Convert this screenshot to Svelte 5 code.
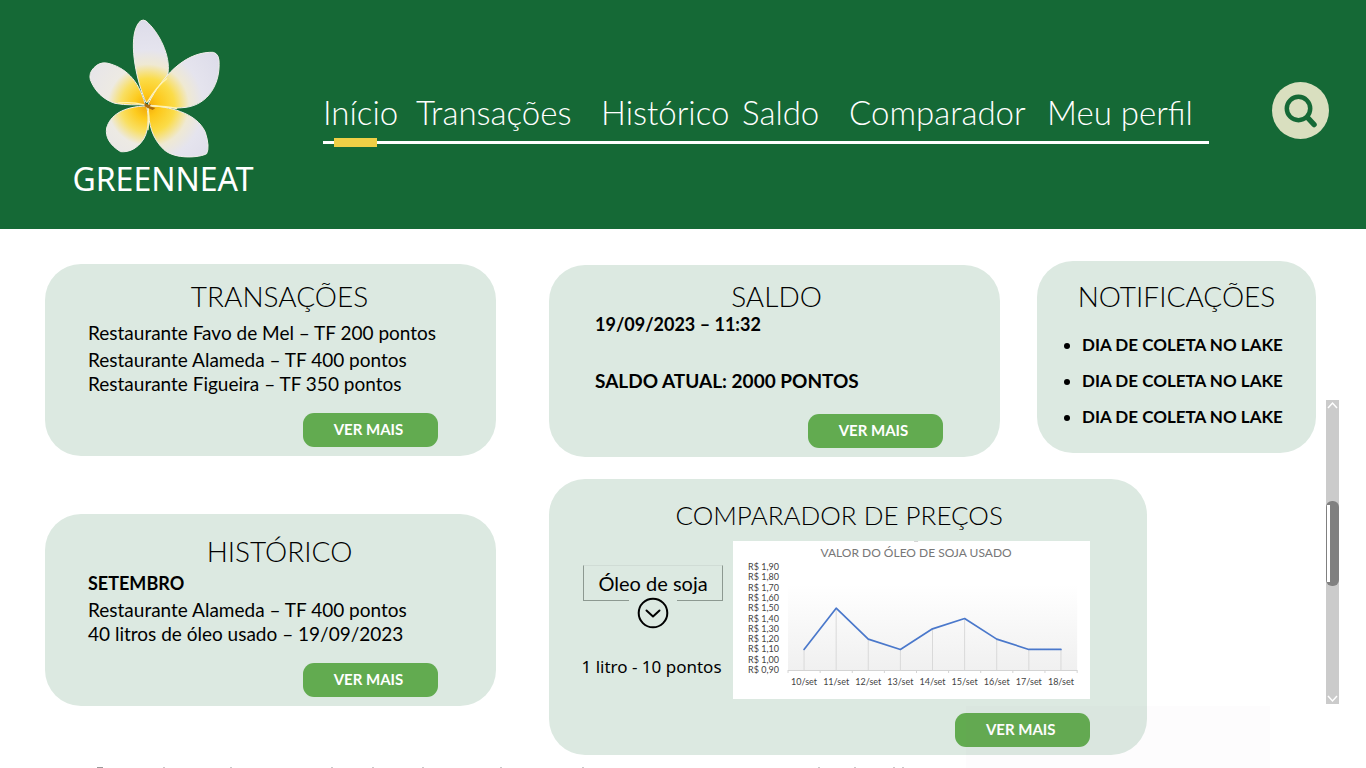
<script>
  const links = ['Início', 'Transações', 'Histórico', 'Saldo', 'Comparador', 'Meu perfil'];
  const notices = ['DIA DE COLETA NO LAKE', 'DIA DE COLETA NO LAKE', 'DIA DE COLETA NO LAKE'];
  const prices = [1.1, 1.5, 1.2, 1.1, 1.3, 1.4, 1.2, 1.1, 1.1];
  const ticks = ['1,90', '1,80', '1,70', '1,60', '1,50', '1,40', '1,30', '1,20', '1,10', '1,00', '0,90'];
  const px = (i) => 71 + i * 32.1;
  const py = (v) => 129 - (v - 0.9) * 103;
  const line = prices.map((v, i) => `${px(i)},${py(v)}`).join(' ');
  const tips = [163, 230, 331, 372, 422, 500, 582, 818, 854, 893, 902];
</script>

<div class="page">
  <header>
    <a class="brand" href="#inicio">
      <svg viewBox="84 50 402 429" aria-hidden="true">
        <defs>
          <radialGradient id="petal" gradientUnits="userSpaceOnUse" cx="263" cy="316" r="270">
            <stop offset="0" stop-color="#f3a90c" />
            <stop offset="0.12" stop-color="#fdc718" />
            <stop offset="0.3" stop-color="#fbdc48" />
            <stop offset="0.46" stop-color="#efe9d3" />
            <stop offset="0.62" stop-color="#e5e4ee" />
            <stop offset="1" stop-color="#dcdbe9" />
          </radialGradient>
          <radialGradient id="petalPale" gradientUnits="userSpaceOnUse" cx="263" cy="316" r="200">
            <stop offset="0" stop-color="#f1a50a" />
            <stop offset="0.2" stop-color="#fdcb1e" />
            <stop offset="0.4" stop-color="#f9df62" />
            <stop offset="0.6" stop-color="#edeae3" />
            <stop offset="1" stop-color="#e7e5e9" />
          </radialGradient>
        </defs>
        <g stroke="#f1eeea" stroke-width="3" stroke-linejoin="round">
          <path fill="url(#petal)" d="M258 306C232 250 205 132 230 78Q242 52 258 62C298 96 332 168 324 218C318 242 285 275 262 306Z" />
          <path fill="url(#petal)" d="M266 308C306 230 370 160 448 156Q474 152 477 180C482 250 445 312 378 321C340 326 300 320 265 313Z" />
          <path fill="url(#petal)" d="M268 316C320 318 410 335 436 396Q450 440 440 460C420 472 345 478 312 448C276 414 266 372 265 325Z" />
          <path fill="url(#petalPale)" d="M260 317C267 350 268 400 243 427C225 448 203 456 182 454C150 435 135 410 140 383C150 345 190 318 260 317Z" />
          <path fill="url(#petalPale)" d="M255 310C235 238 195 200 140 188Q118 185 102 202Q86 218 91 238C104 272 130 298 165 309C200 316 230 312 258 314Z" />
        </g>
        <g fill="none" stroke="#fff3b0" stroke-width="4" stroke-linecap="round">
          <path d="M263 304C280 275 300 250 320 235" />
          <path d="M272 317C310 317 330 319 350 325" />
          <path d="M264 322C268 350 266 370 264 388" />
          <path d="M250 313C225 306 200 306 175 308" />
        </g>
        <path d="M254 307l10 6 10-2-5 7 17 5-8 6-16-7-8-4z" fill="#ad6b0c" />
      </svg>
      <span>GREENNEAT</span>
    </a>
    <nav>
      {#each links as label, i}
        <a href="#{label}" class:active={i === 0}>{label}</a>
      {/each}
    </nav>
    <button class="search" aria-label="Buscar">
      <svg viewBox="0 0 57 57" aria-hidden="true">
        <circle cx="26.500" cy="26.500" r="11.700" fill="none" stroke="#156936" stroke-width="4.500" />
        <path d="M35.500 35.500l6.500 7" stroke="#156936" stroke-width="5.500" stroke-linecap="round" />
      </svg>
    </button>
  </header>

  <main>
    <div class="left">
      <section class="card">
        <h2>TRANSAÇÕES</h2>
        <p class="first">Restaurante Favo de Mel – TF 200 pontos</p>
        <p>Restaurante Alameda – TF 400 pontos</p>
        <p>Restaurante Figueira – TF 350 pontos</p>
        <button class="more">VER MAIS</button>
      </section>
      <section class="card history">
        <h2>HISTÓRICO</h2>
        <p class="first"><strong>SETEMBRO</strong></p>
        <p>Restaurante Alameda – TF 400 pontos</p>
        <p>40 litros de óleo usado – 19/09/2023</p>
        <button class="more">VER MAIS</button>
      </section>
    </div>

    <div class="right">
      <div class="top">
        <section class="card balance">
          <h2>SALDO</h2>
          <p><strong>19/09/2023 – 11:32</strong></p>
          <p class="total"><strong>SALDO ATUAL: 2000 PONTOS</strong></p>
          <button class="more">VER MAIS</button>
        </section>
        <section class="card notices">
          <h2>NOTIFICAÇÕES</h2>
          <ul>
            {#each notices as text}
              <li>{text}</li>
            {/each}
          </ul>
        </section>
      </div>

      <section class="card compare">
        <h2>COMPARADOR DE PREÇOS</h2>
        <div class="body">
          <div class="picker">
            <div class="field">
              <select aria-label="Produto">
                <option>Óleo de soja</option>
              </select>
              <svg class="chevron" viewBox="0 0 32 32" aria-hidden="true">
                <circle cx="16" cy="16" r="14.300" fill="#dce9e1" stroke="#000" stroke-width="2" />
                <path d="M9.500 13.500l6.500 6 6.500-6" fill="none" stroke="#000" stroke-width="2" stroke-linecap="round" stroke-linejoin="round" />
              </svg>
            </div>
            <span class="rate">1 litro - 10 pontos</span>
          </div>
          <svg class="chart" viewBox="0 0 357 158" role="img" aria-label="Valor do óleo de soja usado">
            <defs>
              <linearGradient id="plot" x1="0" y1="0" x2="0" y2="1">
                <stop offset="0" stop-color="#fff" />
                <stop offset="1" stop-color="#f0f0f0" />
              </linearGradient>
            </defs>
            <rect width="357" height="158" fill="#fff" />
            <path d="M181 0h4" stroke="#aaa" />
            <text class="title" x="183" y="16" text-anchor="middle">VALOR DO ÓLEO DE SOJA USADO</text>
            <rect x="55" y="44" width="289" height="85" fill="url(#plot)" />
            {#each ticks as t, i}
              <text x="15" y={29 + i * 10.3}>R$ {t}</text>
            {/each}
            <path d="M55 129.500H344" stroke="#d4d4d4" />
            {#each prices as v, i}
              <path d="M{px(i)} {py(v)}V129" stroke="#d9d9d9" />
              <path d="M{px(i) - 16} 129v3" stroke="#d4d4d4" />
              <text x={px(i)} y="144" text-anchor="middle">{10 + i}/set</text>
            {/each}
            <path d="M344 129v3" stroke="#d4d4d4" />
            <polyline points={line} fill="none" stroke="#4a78cb" stroke-width="1.700" stroke-linejoin="round" stroke-linecap="round" />
          </svg>
        </div>
        <button class="more">VER MAIS</button>
      </section>
    </div>

    <div class="scroller">
      <button aria-label="Subir"><svg viewBox="0 0 13 11"><path d="M2 8l4.500-5L11 8" /></svg></button>
      <div class="thumb"></div>
      <button aria-label="Descer"><svg viewBox="0 0 13 11"><path d="M2 3l4.500 5L11 3" /></svg></button>
    </div>
  </main>

  <svg class="edge" viewBox="0 0 1366 13" aria-hidden="true">
    <path d="M97 12.500h6" stroke="#999" />
    {#each tips as x}
      <path d="M{x} 12.500h2" stroke="#c9c9c9" />
    {/each}
  </svg>
  <div class="veil"></div>
</div>

<style>
  :global(body) {
    margin: 0;
    background: #fff;
  }
  .page {
    position: relative;
    overflow: hidden;
    color: #000;
    font-family: Lato, "Open Sans", sans-serif;
  }
  header {
    display: flex;
    align-items: flex-start;
    box-sizing: border-box;
    min-height: 229px;
    padding: 17px 37px 0 72px;
    background: #156936;
  }
  .brand {
    display: flex;
    flex-direction: column;
    align-items: center;
    width: 182px;
    color: #fff;
    text-decoration: none;
    font: 32px/38px "Noto Sans", sans-serif;
  }
  .brand svg {
    width: 134px;
    height: 143px;
    margin-right: 16px;
  }
  nav {
    display: grid;
    grid-template-columns: 93fr 185fr 141fr 107fr 198fr 162fr;
    flex: 1;
    margin: 75px 63px 0 69px;
    border-bottom: 3px solid #fff;
  }
  nav a {
    position: relative;
    padding-bottom: 9px;
    color: #fff;
    text-decoration: none;
    white-space: nowrap;
    font-size: 33px;
    line-height: 40px;
    font-weight: 300;
  }
  nav a.active::after {
    content: "";
    position: absolute;
    left: 11px;
    bottom: -6px;
    width: 43px;
    height: 9px;
    background: #efcf46;
  }
  .search {
    width: 57px;
    height: 57px;
    margin-top: 65px;
    padding: 0;
    border: 0;
    border-radius: 50%;
    background: #d9dfbf;
  }
  .search svg {
    display: block;
    width: 57px;
    height: 57px;
  }
  main {
    display: flex;
    align-items: flex-start;
    padding: 32px 27px 0 45px;
  }
  .left {
    display: flex;
    flex: 451;
    flex-direction: column;
    gap: 58px;
    margin: 3px 53px 0 0;
  }
  .right {
    flex: 767;
    margin-right: 10px;
  }
  .top {
    display: grid;
    grid-template-columns: minmax(0, 451fr) minmax(0, 279fr);
    align-items: start;
    gap: 37px;
  }
  .card {
    display: flex;
    flex-direction: column;
    box-sizing: border-box;
    min-height: 192px;
    padding: 14px 43px 9px;
    border-radius: 36px;
    background: #dce9e1;
  }
  h2 {
    margin: 0;
    padding-left: 18px;
    text-align: center;
    font-size: 28px;
    line-height: 36px;
    font-weight: 300;
  }
  p {
    margin: 0;
    font-size: 19px;
    line-height: 24px;
    white-space: nowrap;
  }
  .first {
    margin: 7px 0 3px;
  }
  strong {
    font-size: 18px;
    font-weight: 700;
  }
  .history {
    padding-top: 19px;
  }
  .history .first {
    margin-top: 2px;
  }
  .more {
    align-self: flex-end;
    width: 135px;
    height: 34px;
    margin: auto 15px 0 0;
    padding: 0 4px 2px 0;
    border: 0;
    border-radius: 11px;
    background: #62ab50;
    color: #fff;
    font: 700 15px/20px Lato, sans-serif;
  }
  .balance {
    margin-top: 4px;
    padding: 13px 42px 9px 46px;
  }
  .balance h2 {
    padding: 0;
  }
  .balance p {
    margin-top: -2px;
  }
  .balance .total {
    margin-top: 33px;
  }
  .total strong {
    font-size: 19px;
  }
  .notices {
    padding: 17px 20px 0;
  }
  .notices h2 {
    padding: 0;
  }
  ul {
    display: grid;
    gap: 12px;
    margin: 19px 0 0;
    padding-left: 25px;
  }
  li {
    font-size: 17px;
    line-height: 24px;
    font-weight: 700;
    white-space: nowrap;
  }
  .compare {
    width: 78%;
    min-height: 276px;
    margin-top: 22px;
    padding: 18px 57px 8px 31px;
  }
  .compare h2 {
    padding: 0 0 0 8px;
    font-size: 26px;
  }
  .body {
    display: flex;
    gap: 10px;
    margin-top: 8px;
  }
  .picker {
    display: flex;
    flex: 143;
    flex-direction: column;
    align-items: center;
    gap: 54px;
    padding-top: 24px;
  }
  .field {
    position: relative;
    width: 100%;
    box-sizing: border-box;
    padding-left: 3px;
  }
  select {
    appearance: none;
    width: 100%;
    height: 36px;
    padding: 0;
    border: 1px solid #8d9991;
    border-top-color: #d0dcd5;
    border-radius: 0;
    background: transparent;
    color: #000;
    font: 20px/24px Lato, sans-serif;
    text-align: center;
    text-align-last: center;
  }
  .chevron {
    position: absolute;
    top: 32px;
    left: 50%;
    box-sizing: border-box;
    width: 48px;
    height: 32px;
    margin-left: -23px;
    padding: 0 8px;
    background: #dce9e1;
    pointer-events: none;
  }
  .rate {
    font: 17px/24px "Noto Sans", sans-serif;
    white-space: nowrap;
  }
  .chart {
    flex: 357;
    min-width: 0;
  }
  .chart text {
    fill: #444;
    font: 9px Lato, sans-serif;
  }
  .chart .title {
    fill: #777;
    font-size: 12px;
  }
  .compare .more {
    margin-right: 0;
  }
  .scroller {
    display: flex;
    flex-direction: column;
    justify-content: space-between;
    width: 13px;
    height: 304px;
    margin-top: 139px;
    background: #cbcbcb;
  }
  .scroller button {
    width: 13px;
    height: 11px;
    padding: 0;
    border: 0;
    background: none;
  }
  .scroller svg {
    display: block;
    fill: none;
    stroke: #fff;
    stroke-width: 1.5;
  }
  .thumb {
    box-sizing: border-box;
    height: 85px;
    margin-bottom: 18px;
    padding: 4px 1px;
    border-radius: 6px;
    background: #808080;
  }
  .thumb::before {
    content: "";
    display: block;
    width: 3px;
    height: 77px;
    background: #fff;
  }
  .edge {
    display: block;
    width: 100%;
  }
  .veil {
    position: absolute;
    right: 7%;
    bottom: 0;
    width: 304px;
    height: 62px;
    background: rgba(128, 100, 128, 0.02);
    pointer-events: none;
  }
</style>
